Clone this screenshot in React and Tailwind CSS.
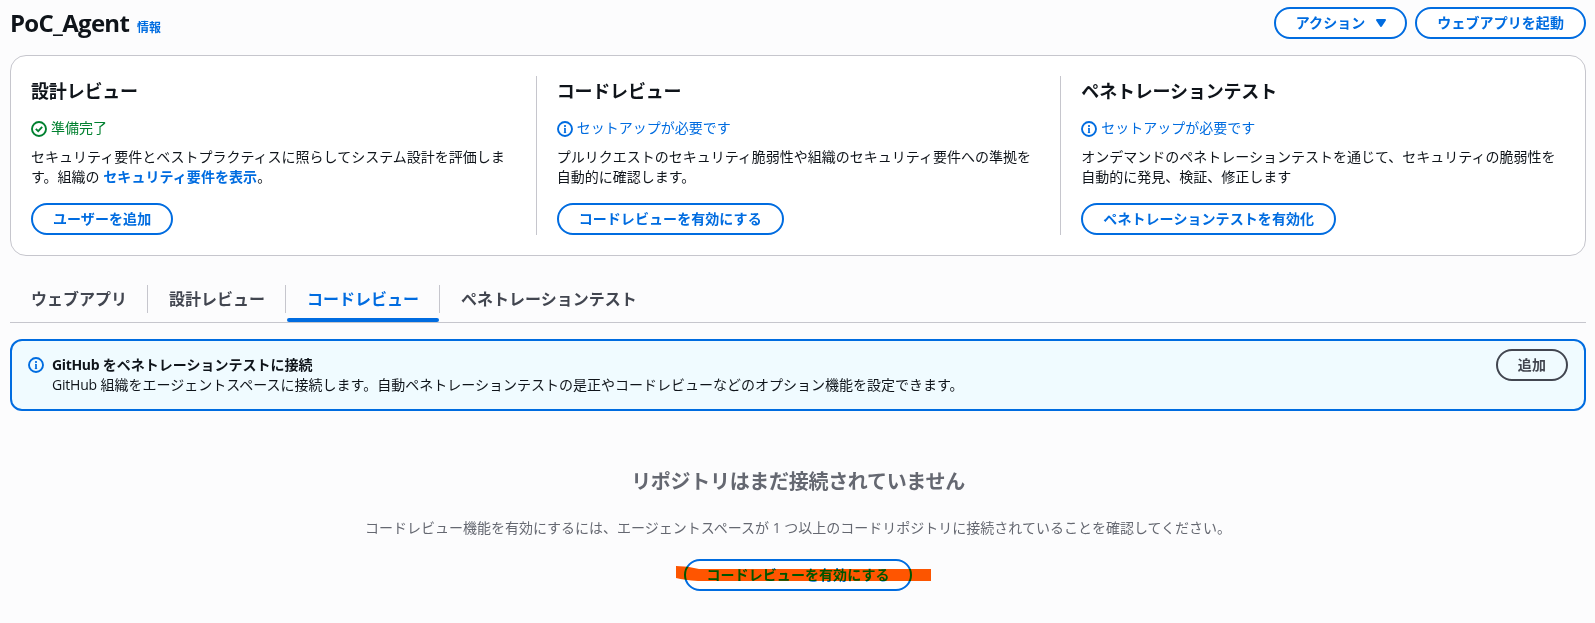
import React from "react";
import clsx from "clsx";

const features = [
  {
    title: "設計レビュー",
    ready: true,
    status: "準備完了",
    text: (
      <>
        セキュリティ要件とベストプラクティスに照らしてシステム設計を評価します。組織の{" "}
        <a href="#" className="inline-block font-bold tracking-[0.005em] text-[#006ce0]">セキュリティ要件を表示</a>。
      </>
    ),
    action: "ユーザーを追加",
  },
  {
    title: "コードレビュー",
    status: "セットアップが必要です",
    text: "プルリクエストのセキュリティ脆弱性や組織のセキュリティ要件への準拠を自動的に確認します。",
    action: "コードレビューを有効にする",
  },
  {
    title: "ペネトレーションテスト",
    status: "セットアップが必要です",
    text: "オンデマンドのペネトレーションテストを通じて、セキュリティの脆弱性を自動的に発見、検証、修正します",
    action: "ペネトレーションテストを有効化",
  },
];

const tabs = ["ウェブアプリ", "設計レビュー", "コードレビュー", "ペネトレーションテスト"];

function InfoIcon() {
  return (
    <svg viewBox="0 0 16 16" className="w-4 h-4 shrink-0" fill="none" stroke="currentColor">
      <circle cx="8" cy="8" r="7" strokeWidth="1.9" />
      <path d="M8 4v2M8 7v5" strokeWidth="1.7" />
      <path d="M7 7.4h1M6.8 11.6h2.4" strokeWidth="0.8" />
    </svg>
  );
}

function SuccessIcon() {
  return (
    <svg viewBox="0 0 16 16" className="w-4 h-4 shrink-0" fill="none" stroke="currentColor" strokeWidth="1.9">
      <circle cx="8" cy="8" r="7" />
      <path d="m4.8 7.8 2.4 2.4 4-4.4" strokeWidth="1.8" />
    </svg>
  );
}

function Button({ children, neutral }) {
  return (
    <button
      className={clsx(
        "h-8 px-5 inline-flex items-center rounded-full border-2 text-sm font-bold tracking-[0.005em] whitespace-nowrap",
        neutral ? "border-[#424650] text-[#424650]" : "border-[#006ce0] text-[#006ce0] bg-white"
      )}
    >
      {children}
    </button>
  );
}

export default function App() {
  return (
    <div
      lang="ja"
      className="font-['Open_Sans','Noto_Sans_CJK_JP',sans-serif] min-h-screen bg-[#fcfcfd] pl-[10px] pr-[9px] pt-[7px] text-sm leading-5 text-[#0f141a]"
    >
      <header className="h-8 flex items-center justify-between">
        <div className="flex items-baseline gap-2 pb-px">
          <h1 className="text-2xl leading-[30px] font-bold tracking-[-0.03em]">PoC_Agent</h1>
          <a href="#" className="text-xs font-bold text-[#006ce0]">情報</a>
        </div>
        <div className="flex gap-2">
          <Button>
            アクション
            <svg
              viewBox="0 0 16 16"
              className="w-4 h-4 ml-2 -mr-1"
              fill="currentColor"
              stroke="currentColor"
              strokeWidth="2"
              strokeLinejoin="round"
            >
              <path d="M4 5h8l-4 6-4-6z" />
            </svg>
          </Button>
          <Button>ウェブアプリを起動</Button>
        </div>
      </header>

      <section className="mt-4 py-5 grid grid-cols-3 rounded-2xl border border-[#c6c6cd] bg-white">
        {features.map((f, i) => (
          <div key={f.title} className={clsx("px-5", i > 0 && "border-l border-[#c6c6cd]")}>
            <h2 className="pt-1 text-lg leading-[22px] font-bold tracking-[-0.01em]">{f.title}</h2>
            <div className={clsx("mt-[17px] flex items-center gap-1", f.ready ? "text-[#00802f]" : "text-[#006ce0]")}>
              {f.ready ? <SuccessIcon /> : <InfoIcon />}
              <span className="leading-[18px] pb-0.5">{f.status}</span>
            </div>
            <p className="mt-2 mb-4">{f.text}</p>
            <Button>{f.action}</Button>
          </div>
        ))}
      </section>

      <nav className="mt-[22px] h-[45px] flex border-b border-[#c6c6cd]">
        {tabs.map((tab, i) => (
          <div key={tab} className="flex">
            <div
              className={clsx(
                "ml-px pt-[10px] flex flex-col justify-between text-base leading-[22px] font-bold",
                i === 2 ? "text-[#006ce0]" : "text-[#424650]"
              )}
            >
              <span className="px-5">{tab}</span>
              {i === 2 && <div className="h-1 rounded-[2px] bg-[#006ce0]" />}
            </div>
            {i < 3 && <div className="mt-[7px] w-px h-7 bg-[#c6c6cd]" />}
          </div>
        ))}
      </nav>

      <section className="mt-4 h-[72px] px-4 pt-2 flex items-start rounded-xl border-2 border-[#006ce0] bg-[#f0fbff]">
        <div className="mt-2 text-[#006ce0]">
          <InfoIcon />
        </div>
        <div className="ml-2 pt-1.5 flex-1">
          <div className="font-bold">
            <span className="tracking-[-0.025em]">GitHub</span> をペネトレーションテストに接続
          </div>
          <div>
            <span className="tracking-[-0.015em]">GitHub</span>{" "}
            組織をエージェントスペースに接続します。自動ペネトレーションテストの是正やコードレビューなどのオプション機能を設定できます。
          </div>
        </div>
        <Button neutral>追加</Button>
      </section>

      <section className="pt-[59px] flex flex-col items-center text-[#656871]">
        <h3 className="text-xl leading-6 font-bold tracking-[-0.015em]">リポジトリはまだ接続されていません</h3>
        <p className="mt-6 mb-[21px]">
          コードレビュー機能を有効にするには、エージェントスペースが 1 つ以上のコードリポジトリに接続されていることを確認してください。
        </p>
        <div className="relative">
          <Button>コードレビューを有効にする</Button>
          {/* marker stroke */}
          <svg
            viewBox="0 0 256 20"
            className="absolute -left-2 top-[6px] w-64 h-5 max-w-none mix-blend-darken"
            fill="#ff5500"
          >
            <path d="M0 1Q12 1 23 4H255V16H22Q8 15 0 13z" />
          </svg>
        </div>
      </section>
    </div>
  );
}
